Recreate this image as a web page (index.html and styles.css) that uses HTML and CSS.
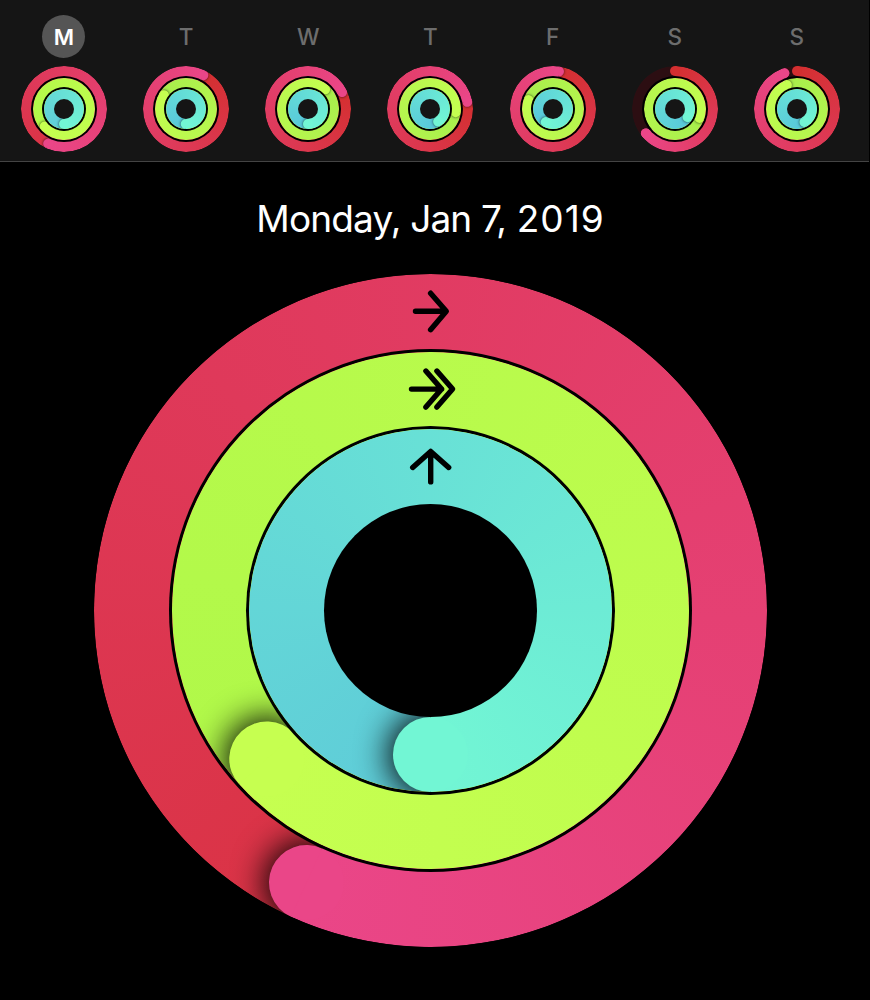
FILE: index.html
```html
<!DOCTYPE html>
<html lang="en">
<head>
  <meta charset="utf-8">
  <title>Activity</title>
  <link rel="stylesheet" href="styles.css">
</head>
<body>
  <header class="week" id="week"></header>
  <main class="day">
    <h1 class="date">Monday, Jan 7, <span class="year">2019</span></h1>
    <div class="dial" id="dial">
      <svg class="glyphs" viewBox="-336.5 -336.5 673 673" aria-hidden="true">
        <path d="M-15 -299.2H15.6M.1 -317.3L15.8 -299.2L.1 -280.8"/>
        <path d="M-19 -221.4H11.2M-4.6 -239.4L11.1 -221.4L-4.6 -203.4M6.4 -239.4L22.1 -221.4L6.4 -203.4"/>
        <path d="M.2 -128.6V-158.8M-17.8 -143L.2 -159.1L18.2 -143"/>
      </svg>
    </div>
  </main>
  <script src="app.js"></script>
</body>
</html>
```
FILE: styles.css
```css
* {
  box-sizing: border-box;
}

body {
  margin: 0;
  width: 870px;
  height: 1000px;
  overflow: hidden;
  background: #000;
  color: #fff;
  font-family: Inter, "Liberation Sans", sans-serif;
}

.week {
  display: flex;
  width: 869px;
  height: 162px;
  padding: 15px 0 0 2.9px;
  background: #151515;
  border-bottom: 1px solid #444;
}

.weekday {
  display: flex;
  flex-direction: column;
  align-items: center;
  gap: 8px;
  width: 122.15px;
}

.letter {
  display: grid;
  place-items: center;
  width: 43px;
  height: 43px;
  border-radius: 50%;
  color: #6d6d6d;
  font-size: 22.5px;
  font-weight: 500;
  line-height: 42px;
  padding-top: 1px;
}

.letter-selected {
  background: #555;
  color: #fff;
  font-size: 22px;
  font-weight: 600;
}

.day {
  display: flex;
  flex-direction: column;
  align-items: center;
  width: 861px;
}

.date {
  margin: 0;
  padding-top: 34px;
  height: 112px;
  font-size: 37px;
  font-weight: 400;
  line-height: 46px;
  letter-spacing: -0.85px;
  white-space: nowrap;
}

.year {
  margin-left: 1px;
  letter-spacing: 1px;
}

.rings,
.dial {
  display: grid;
  place-items: center;
}

.rings > *,
.dial > * {
  grid-area: 1 / 1;
}

.rings-small {
  --move: 86px;
  --exercise: 62px;
  --stand: 40px;
  --center: 20px;
  --band: 10px;
  --gap: 2px;
  --hole: #151515;
}

.rings-large {
  --move: 673px;
  --exercise: 517px;
  --stand: 363px;
  --center: 213px;
  --band: 75px;
  --gap: 3px;
  --hole: #000;
}

.ring {
  isolation: isolate;
  width: var(--size);
  height: var(--size);
  border-radius: 50%;
  overflow: hidden;
}

.move { --size: var(--move); --tail: #d42f30; --head: #ea4688; --track: #2c0e12; }
.exercise { --size: var(--exercise); --tail: #a8ee4c; --head: #c4fe50; }
.stand { --size: var(--stand); --tail: #57c6da; --head: #72f6d4; }

.first-lap-done .move { --tail: #da3345; }
.first-lap-done .exercise { --tail: #b0f849; --head: #c6ff50; }
.first-lap-done .stand { --tail: #5ecbd8; }

.exercise,
.stand {
  box-shadow: 0 0 0 var(--gap) #000;
}

.sweep {
  position: relative;
  display: grid;
  justify-items: center;
  width: 100%;
  height: 100%;
  border-radius: 50%;
  background: conic-gradient(var(--tail), var(--head));
  transform: rotate(var(--angle));
}

.sweep > * {
  grid-area: 1 / 1;
}

.sweep-open {
  background: conic-gradient(var(--track) calc(360deg - var(--angle)), var(--tail) calc(360deg - var(--angle)), var(--head));
}

.front {
  display: grid;
  justify-items: center;
  width: 100%;
  height: 100%;
  clip-path: inset(0 0 0 50%);
}

.cap {
  width: var(--band);
  height: var(--band);
  border-radius: 50%;
  background: var(--head);
}

.front .cap {
  box-shadow: 0 0 calc(var(--band) * 0.42) calc(var(--band) * 0.06) rgba(0, 0, 0, 0.95);
}

.rings-small .front .cap {
  box-shadow: 0 0 3px 0 rgba(0, 0, 0, 0.75);
}

.sweep-open .front .cap {
  box-shadow: none;
}

.start {
  display: grid;
  justify-items: center;
  width: 100%;
  height: 100%;
  transform: rotate(calc(-1 * var(--angle)));
}

.start .cap {
  background: var(--tail);
}

.hole {
  isolation: isolate;
  width: var(--center);
  height: var(--center);
  border-radius: 50%;
  background: var(--hole);
}

.glyphs {
  z-index: 1;
  width: 673px;
  height: 673px;
  fill: none;
  stroke: #000;
  stroke-width: 5.4;
  stroke-linecap: round;
  stroke-linejoin: round;
}
```
FILE: app.js
```javascript
// Leading-end angle of each ring in degrees, clockwise from the top.
const days = [
  { letter: "M", move: 204.5, exercise: 227.8, stand: 180, selected: true },
  { letter: "T", move: 27, exercise: 302, stand: 181 },
  { letter: "W", move: 63.5, exercise: 41, stand: 180 },
  { letter: "T", move: 79, exercise: 97, stand: 147 },
  { letter: "F", move: 9, exercise: 290, stand: 209 },
  { letter: "S", move: 230, exercise: 110, stand: 123, open: true },
  { letter: "S", move: 340.5, exercise: 337, stand: 150, open: true }
];

function ring(kind, angle, open) {
  const start = open ? '<div class="start"><div class="cap"></div></div>' : "";
  return `<div class="ring ${kind}">
    <div class="sweep${open ? " sweep-open" : ""}" style="--angle: ${angle}deg">
      ${start}
      <div class="front"><div class="cap"></div></div>
      <div class="cap"></div>
    </div>
  </div>`;
}

function rings(day, size) {
  const lap = day.selected ? " first-lap-done" : "";
  return `<div class="rings rings-${size}${lap}">
    ${ring("move", day.move, day.open)}
    ${ring("exercise", day.exercise)}
    ${ring("stand", day.stand)}
    <div class="hole"></div>
  </div>`;
}

document.getElementById("week").innerHTML = days.map(day => `
  <div class="weekday">
    <div class="letter${day.selected ? " letter-selected" : ""}">${day.letter}</div>
    ${rings(day, "small")}
  </div>`).join("");

document.getElementById("dial").insertAdjacentHTML("afterbegin", rings(days[0], "large"));
```
